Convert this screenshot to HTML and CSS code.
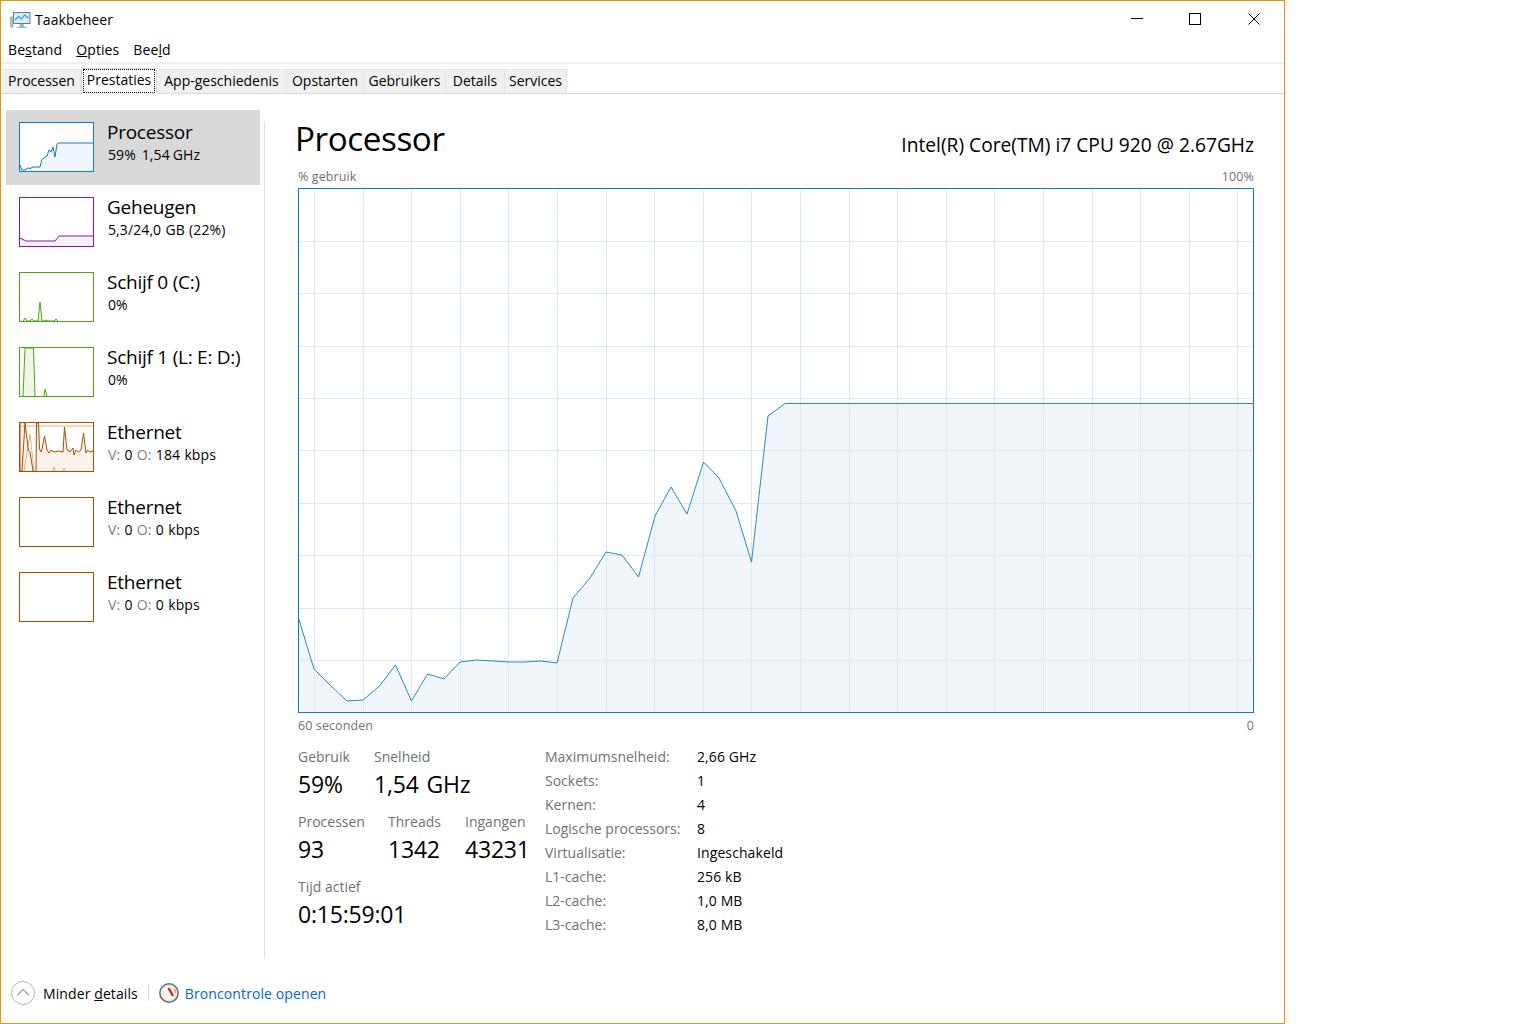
FILE: index.html
```html
<!DOCTYPE html>
<html lang="nl">
<head>
<meta charset="utf-8">
<title>Taakbeheer</title>
<link rel="stylesheet" href="styles.css">
</head>
<body>
<div class="window">
  <header class="titlebar">
    <svg class="app-icon" width="22" height="20" viewBox="0 0 22 20">
      <rect x="3.5" y="2.5" width="16.500" height="11" fill="#d5ecfa" stroke="#6d7a83"/>
      <path d="M5 10l3.500-3.500 3 2.500 3-4 4 3" fill="none" stroke="#3a97d6" stroke-width="1.200"/>
      <rect x="0.500" y="7" width="2.500" height="10" fill="#a8d8a0" stroke="#8b969b" stroke-width=".7"/>
      <path d="M10 14h3.500l1 3H17v1H6.500v-1H9z" fill="#a9b0b5"/>
    </svg>
    <span class="app-name">Taakbeheer</span>
    <div class="controls">
      <svg width="12" height="12" viewBox="0 0 12 12"><path d="M0 5.5h12" stroke="#000"/></svg>
      <svg width="12" height="12" viewBox="0 0 12 12"><rect x=".5" y=".5" width="11" height="11" fill="none" stroke="#000"/></svg>
      <svg class="close" width="12" height="12" viewBox="0 0 12 12"><path d="M.5.5l11 11M11.5.5l-11 11" stroke="#000" fill="none"/></svg>
    </div>
  </header>
  <nav class="menu">
    <span>Be<u>s</u>tand</span>
    <span><u>O</u>pties</span>
    <span>Bee<u>l</u>d</span>
  </nav>
  <div class="tabs">
    <div class="tab">Processen</div>
    <div class="tab active"><span class="focus">Prestaties</span></div>
    <div class="tab">App-geschiedenis</div>
    <div class="tab">Opstarten</div>
    <div class="tab">Gebruikers</div>
    <div class="tab">Details</div>
    <div class="tab">Services</div>
  </div>
  <div class="content">
    <aside class="side">
      <div class="item selected">
        <svg class="thumb" viewBox="0 0 75 50"><path class="cpu-f" d="M1 43L2.7 48H9L10 46 14 45H21L22.7 38 26 35 30 28 32 30 34 25 36 35 38 22 39.5 21H74V49H1Z"/><path class="cpu-l" d="M1 43L2.7 48 6 48 9 46 11 46.5 14 45H21L22.7 38 26 35 28 34 30 28 32 30 34 25 36 35 38 22 39.5 21H74"/><rect class="cpu-b" x=".5" y=".5" width="74" height="49"/></svg>
        <div class="item-text"><div class="item-name">Processor</div><div class="item-sub tight">59%&nbsp; 1,54 GHz</div></div>
      </div>
      <div class="item">
        <svg class="thumb" viewBox="0 0 75 50"><path class="mem-f" d="M1 41L7 44H36L40 39H74V49H1Z"/><path class="mem-l" d="M1 41L7 44H36L40 39H74"/><rect class="mem-b" x=".5" y=".5" width="74" height="49"/></svg>
        <div class="item-text"><div class="item-name">Geheugen</div><div class="item-sub">5,3/24,0 GB (22%)</div></div>
      </div>
      <div class="item">
        <svg class="thumb" viewBox="0 0 75 50"><path class="disk-f" d="M4 49L6 46 8 49H11L13 47 15 49H19L21 30 23 49H25L27 48 29 49H35L37 47 39 49Z"/><path class="disk-l" d="M4 49L6 46 8 49H11L13 47 15 49H19L21 30 23 49H25L27 48 29 49H35L37 47 39 49"/><rect class="disk-b" x=".5" y=".5" width="74" height="49"/></svg>
        <div class="item-text"><div class="item-name">Schijf 0 (C:)</div><div class="item-sub">0%</div></div>
      </div>
      <div class="item">
        <svg class="thumb" viewBox="0 0 75 50"><path class="disk-f" d="M4 49L6 1H14.500L16 49ZM25 49L26 42 28 49Z"/><path class="disk-l" d="M4 49L6 1H14.500L16 49M25 49L26 42 28 49"/><rect class="disk-b" x=".5" y=".5" width="74" height="49"/></svg>
        <div class="item-text"><div class="item-name">Schijf 1 (L: E: D:)</div><div class="item-sub">0%</div></div>
      </div>
      <div class="item">
        <svg class="thumb" viewBox="0 0 75 50"><path class="eth-f" d="M1 49V1H6L9.500 29 11 30 14 49H17L17.500 1H19.500L20.500 27 22 30 23 27 25.500 14 28 28 32 31 33 29 36 30 39 29 44 30 45.500 5 48 28 51 30 54 26 55 33 57 28 59.500 30 62 28 64.500 11 67 31 68.500 28 71 30 74 29V49Z"/><path class="eth-d" d="M1 4H74M5 49L11 12 15 49M34 49l1-4 1 4M44 49l1-3 1 3"/><path class="eth-l" d="M1 1V49H3L6 1 9.500 29 11 30 14 49H15M17 49L17.500 1H19.500L20.500 27 22 30 23 27 25.500 14 28 28 30 31 32 28 33 29 36 30 39 29 44 30 45.500 5 48 28 51 30 54 26 55 33 57 28 59.500 30 62 28 64.500 11 67 31 68.500 28 71 30 74 29"/><rect class="eth-b" x=".5" y=".5" width="74" height="49"/></svg>
        <div class="item-text"><div class="item-name">Ethernet</div><div class="item-sub"><span class="dim">V:</span> 0 <span class="dim">O:</span> 184 kbps</div></div>
      </div>
      <div class="item">
        <svg class="thumb" viewBox="0 0 75 50"><rect class="eth-b" x=".5" y=".5" width="74" height="49"/></svg>
        <div class="item-text"><div class="item-name">Ethernet</div><div class="item-sub"><span class="dim">V:</span> 0 <span class="dim">O:</span> 0 kbps</div></div>
      </div>
      <div class="item">
        <svg class="thumb" viewBox="0 0 75 50"><rect class="eth-b" x=".5" y=".5" width="74" height="49"/></svg>
        <div class="item-text"><div class="item-name">Ethernet</div><div class="item-sub"><span class="dim">V:</span> 0 <span class="dim">O:</span> 0 kbps</div></div>
      </div>
    </aside>
    <div class="divider"></div>
    <main class="main">
      <div class="head">
        <h1 class="title">Processor</h1>
        <div class="model">Intel(R) Core(TM) i7 CPU 920 @ 2.67GHz</div>
      </div>
      <div class="caption"><span>% gebruik</span><span>100%</span></div>
      <svg class="chart" width="956" height="525" viewBox="298 188 956 525">
        <path class="chart-fill" d="M298.500 618L314 669 330 685 347 701 363 700 379.500 686 395.500 665 411.500 701 427.500 674 444 679 460 662 476 660 493 661 509 662 525 662 541 661 557 663 573 598 590 578 606 552 622 555 638.500 577 655 516 671 487 687 514 703.500 462 719 478 736 511 751.500 562 768 416 785 403H1253V712H298.500Z"/>
        <path class="chart-grid" d="M314.500 189V712M363.500 189V712M411.500 189V712M460.500 189V712M508.500 189V712M557.500 189V712M606.500 189V712M654.500 189V712M703.500 189V712M751.500 189V712M800.500 189V712M849.500 189V712M897.500 189V712M946.500 189V712M994.500 189V712M1043.500 189V712M1092.500 189V712M1140.500 189V712M1189.500 189V712M1237.500 189V712M299 241.500H1253M299 293.500H1253M299 346.500H1253M299 398.500H1253M299 450.500H1253M299 503.500H1253M299 555.500H1253M299 608.500H1253M299 660.500H1253"/>
        <path class="chart-line" d="M298.500 618L314 669 330 685 347 701 363 700 379.500 686 395.500 665 411.500 701 427.500 674 444 679 460 662 476 660 493 661 509 662 525 662 541 661 557 663 573 598 590 578 606 552 622 555 638.500 577 655 516 671 487 687 514 703.500 462 719 478 736 511 751.500 562 768 416 785 403.500H1253"/>
        <rect class="chart-border" x="298.500" y="188.500" width="955" height="524"/>
      </svg>
      <div class="caption under"><span>60 seconden</span><span>0</span></div>
      <section class="stats">
        <div class="live">
          <div class="live-row">
            <div class="stat s-usage"><div class="stat-label">Gebruik</div><div class="stat-value">59%</div></div>
            <div class="stat"><div class="stat-label">Snelheid</div><div class="stat-value">1,54 GHz</div></div>
          </div>
          <div class="live-row">
            <div class="stat s-proc"><div class="stat-label">Processen</div><div class="stat-value">93</div></div>
            <div class="stat s-thr"><div class="stat-label">Threads</div><div class="stat-value">1342</div></div>
            <div class="stat"><div class="stat-label">Ingangen</div><div class="stat-value">43231</div></div>
          </div>
          <div class="live-row">
            <div class="stat"><div class="stat-label">Tijd actief</div><div class="stat-value">0:15:59:01</div></div>
          </div>
        </div>
        <dl class="specs">
          <dt>Maximumsnelheid:</dt><dd>2,66 GHz</dd>
          <dt>Sockets:</dt><dd>1</dd>
          <dt>Kernen:</dt><dd>4</dd>
          <dt>Logische processors:</dt><dd>8</dd>
          <dt>Virtualisatie:</dt><dd>Ingeschakeld</dd>
          <dt>L1-cache:</dt><dd>256 kB</dd>
          <dt>L2-cache:</dt><dd>1,0 MB</dd>
          <dt>L3-cache:</dt><dd>8,0 MB</dd>
        </dl>
      </section>
    </main>
  </div>
  <footer class="footer">
    <svg class="chev" width="24" height="24" viewBox="0 0 24 24"><circle cx="12" cy="12" r="11.500" fill="#fff" stroke="#b4b4b4"/><path d="M6 14.500l6-6 6 6" fill="none" stroke="#a8a8a8" stroke-width="1.300"/></svg>
    <span class="less">Minder <u>d</u>etails</span>
    <span class="sep"></span>
    <svg class="gauge" width="20" height="20" viewBox="0 0 20 20"><circle cx="10" cy="10" r="9.200" fill="#e8e4de" stroke="#6b6b6b" stroke-width="1.500"/><circle cx="10" cy="10" r="6.800" fill="#fbfaf7"/><path d="M15 6a7 7 0 0 1 1.500 4" stroke="#ee9a3a" stroke-width="1.500" fill="none"/><path d="M9.500 5l4.500 8" stroke="#c8232a" stroke-width="2.400"/></svg>
    <a class="link">Broncontrole openen</a>
  </footer>
</div>
</body>
</html>
```

FILE: styles.css
```css
* { box-sizing: border-box; }
html, body { margin: 0; height: 100%; background: #fff; }
body { font-family: "Open Sans", "Noto Sans", sans-serif; color: #000; font-size: 14px; letter-spacing: .1px; }
.window {
  width: 1285px; height: 1024px; border: 1px solid #e8930f; background: #fff;
  display: flex; flex-direction: column;
}
.titlebar { height: 37px; display: flex; align-items: center; padding-left: 9px; flex: none; }
.app-icon { margin-right: 3px; }
.controls { margin-left: auto; display: flex; gap: 46px; padding-right: 24px; margin-top: -2px; }
.close { margin-left: 1px; }
.menu {
  height: 26px; flex: none; display: flex; gap: 14px; padding: 0 0 1px 7px; align-items: center;
  border-bottom: 2px solid #f0f0f0;
}
.tabs {
  height: 30px; flex: none; padding: 5px 0 0 2px; display: grid;
  grid-template-columns: 78px 76px 130px 77px 82px 59px 62px; grid-template-rows: 24px; justify-content: start;
  border-bottom: 1px solid #d9d9d9; letter-spacing: 0; line-height: 18px;
}
.tab {
  background: #f0f0f0; border: 1px solid #e3e3e3; border-bottom: 0; border-left: 0;
  display: flex; align-items: center; justify-content: center; white-space: nowrap; padding-bottom: 1px;
}
.tab.active {
  background: #fff; border: 1px solid #d9d9d9; border-bottom: 0;
  margin: -1px 0 -1px 0; padding: 0 1px 1px; position: relative; z-index: 1;
}
.focus { display: flex; align-items: center; justify-content: center; width: 100%; height: 100%; outline: 1px dotted #000; outline-offset: -1px; padding-bottom: 3px; }
.content { flex: 1; display: flex; padding-top: 16px; min-height: 0; }
.side { width: 254px; margin-left: 5px; margin-right: 4px; flex: none; }
.item { height: 75px; display: flex; align-items: flex-start; padding: 12px 0 0 13px; gap: 13px; }
.item.selected { background: #d9d9d9; }
.thumb { width: 75px; height: 50px; flex: none; display: block; }
.thumb .cpu-b, .thumb .mem-b, .thumb .disk-b, .thumb .eth-b { fill: none; stroke-width: 1; }
.cpu-b { stroke: #117dbb; } .cpu-l { fill: none; stroke: #117dbb; stroke-width: 1; } .cpu-f { fill: #f1f6fa; }
.item.selected .thumb { background: #fff; }
.mem-b { stroke: #8b12ae; } .mem-l { fill: none; stroke: #8b12ae; } .mem-f { fill: #f4f2f4; }
.disk-b { stroke: #4da60c; } .disk-l { fill: none; stroke: #4da60c; stroke-width: 1; } .disk-f { fill: #eff7ea; }
.eth-b { stroke: #a74f01; } .eth-l { fill: none; stroke: #a74f01; stroke-width: 1; } .eth-f { fill: #fcf3ec; }
.eth-d { fill: none; stroke: #d9a97c; stroke-width: .9; }
.item-text { margin-top: -2px; }
.item-name { font-size: 19px; line-height: 24px; letter-spacing: -.25px; white-space: nowrap; }
.item-sub { line-height: 22px; white-space: nowrap; margin-left: 1px; word-spacing: .5px; }
.item-sub.tight { word-spacing: -.8px; }
.dim { color: #7a7f85; }
.divider { width: 1px; background: #dcdcdc; margin-top: 12px; flex: none; }
.main { flex: 1; padding: 6px 30px 0 33px; min-width: 0; }
.head { display: flex; justify-content: space-between; align-items: flex-end; height: 52px; }
.title { margin: 0 0 4px -3px; font-weight: 400; font-size: 33.200px; line-height: 50px; letter-spacing: -.4px; }
.model { font-size: 19.200px; line-height: 28px; margin-bottom: 9px; letter-spacing: 0; }
.caption { display: flex; justify-content: space-between; font-size: 12.500px; line-height: 16px; color: #707070; padding-top: 1px; margin-bottom: 3px; }
.caption.under { margin: 4px 0 0; }
.chart { display: block; }
.chart-fill { fill: #f1f6fa; }
.chart-grid { fill: none; stroke: #d9eaf4; stroke-width: 1; }
.chart-line { fill: none; stroke: #117dbb; stroke-width: .9; }
.chart-border { fill: none; stroke: #117dbb; stroke-width: 1; }
.stats { display: flex; margin-top: 11px; }
.live { width: 247px; flex: none; display: flex; flex-direction: column; gap: 9px; }
.live-row { display: flex; }
.s-usage { width: 76px; } .s-proc { width: 90px; } .s-thr { width: 77px; }
.stat-label { line-height: 24px; color: #707070; white-space: nowrap; letter-spacing: 0; }
.stat-value { font-size: 23px; line-height: 30px; padding-bottom: 2px; letter-spacing: -.2px; word-spacing: 2px; white-space: nowrap; }
.specs { margin: -1px 0 0; display: grid; grid-template-columns: 152px auto; grid-auto-rows: 24px; align-items: center; justify-content: start; }
.specs dt { color: #707070; white-space: nowrap; letter-spacing: 0; }
.specs dd { margin: 0; white-space: nowrap; }
.footer { height: 65px; flex: none; display: flex; align-items: center; padding: 5px 0 0 10px; }
.chev { margin-right: 8px; }
.sep { width: 1px; height: 16px; background: #d4d4d4; margin: 0 10px; }
.link { color: #0066cc; margin-left: 6px; }
```
